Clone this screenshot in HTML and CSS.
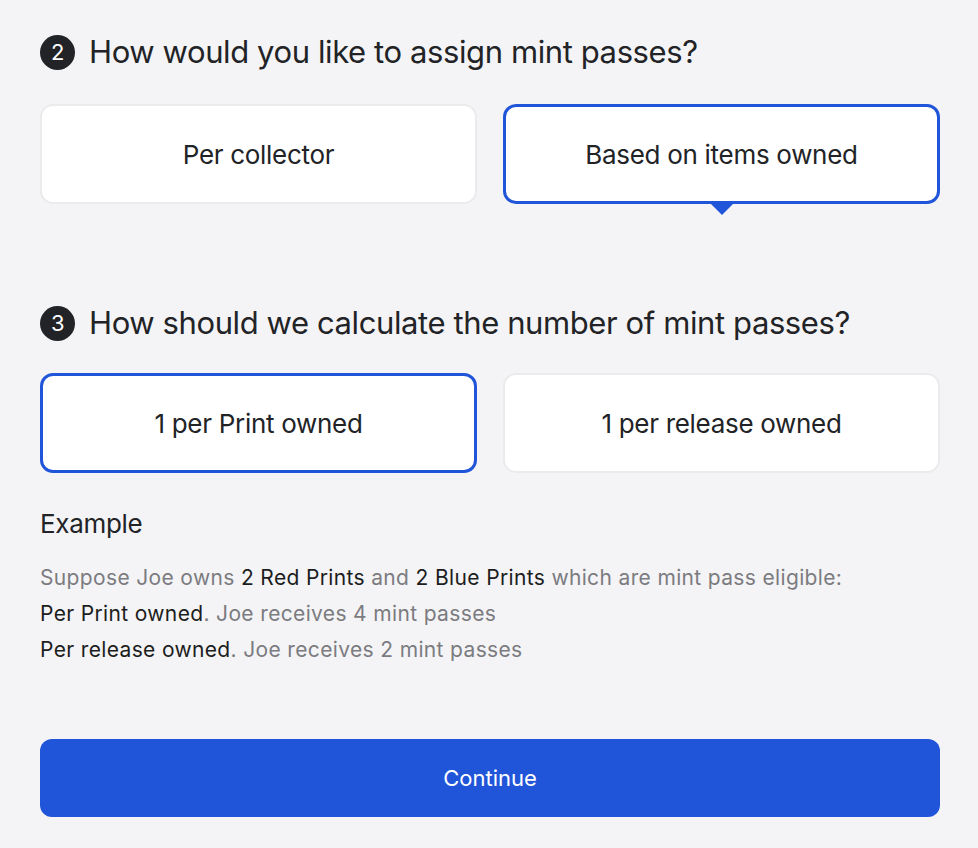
FILE: index.html
```html
<!DOCTYPE html>
<html lang="en">
<head>
<meta charset="utf-8">
<title>Mint passes</title>
<link rel="stylesheet" href="styles.css">
</head>
<body>
<main class="page">
  <section class="step">
    <h2 class="step-title"><span class="step-num">2</span>How would you like to assign mint passes?</h2>
    <div class="options">
      <button class="option">Per collector</button>
      <button class="option selected pointer">Based on items owned</button>
    </div>
  </section>
  <section class="step step-3">
    <h2 class="step-title"><span class="step-num">3</span>How should we calculate the number of mint passes?</h2>
    <div class="options">
      <button class="option selected">1 per Print owned</button>
      <button class="option">1 per release owned</button>
    </div>
  </section>
  <section class="example">
    <h3 class="example-title">Example</h3>
    <p class="example-line">Suppose Joe owns <span class="em">2 Red Prints</span> and <span class="em">2 Blue Prints</span> which are mint pass eligible:</p>
    <p class="example-line"><span class="em">Per Print owned</span>. Joe receives 4 mint passes</p>
    <p class="example-line"><span class="em">Per release owned</span>. Joe receives 2 mint passes</p>
  </section>
  <button class="continue">Continue</button>
</main>
</body>
</html>
```

FILE: styles.css
```css
* { box-sizing: border-box; }
html, body {
  margin: 0;
  padding: 0;
  background: #f4f4f6;
  font-family: Inter, "Noto Sans", sans-serif;
  color: #222326;
}
.page {
  width: 900px;
  margin-left: 40px;
  padding-top: 33px;
}
.step-title {
  display: flex;
  align-items: center;
  margin: 0;
  font-size: 31px;
  font-weight: 400;
  letter-spacing: -0.4px;
  line-height: 38px;
  color: #222326;
}
.step-num {
  display: inline-flex;
  align-items: center;
  justify-content: center;
  width: 35px;
  height: 35px;
  border-radius: 50%;
  background: #222326;
  color: #fff;
  font-size: 22px;
  margin-right: 14px;
  flex: none;
}
.options {
  display: grid;
  grid-template-columns: 1fr 1fr;
  gap: 26px;
  margin-top: 33px;
}
.step-3 .options {
  margin-top: 31px;
}
.option {
  position: relative;
  height: 100px;
  background: #fff;
  border: 2px solid #ebebed;
  border-radius: 13px;
  font-family: inherit;
  font-size: 26px;
  letter-spacing: -0.3px;
  color: #222326;
  cursor: pointer;
}
.option.selected {
  border: 3px solid #2155d9;
}
.pointer::after {
  content: "";
  position: absolute;
  left: 50%;
  top: 100%;
  margin-left: -14px;
  border-left: 14px solid transparent;
  border-right: 14px solid transparent;
  border-top: 14px solid #2155d9;
}
.step-3 {
  margin-top: 100px;
}
.example {
  margin-top: 35px;
}
.example-title {
  margin: 0 0 20px;
  font-size: 26px;
  font-weight: 400;
  letter-spacing: -0.3px;
  line-height: 32px;
  color: #222326;
}
.example-line {
  margin: 0;
  font-size: 21px;
  letter-spacing: 0.35px;
  line-height: 36px;
  color: #7b7b80;
}
.em { color: #1c1d20; }
.continue {
  display: block;
  width: 900px;
  height: 78px;
  margin-top: 71px;
  border: none;
  border-radius: 12px;
  background: #2155d9;
  color: #fff;
  font-family: inherit;
  font-size: 22px;
  cursor: pointer;
}
```
